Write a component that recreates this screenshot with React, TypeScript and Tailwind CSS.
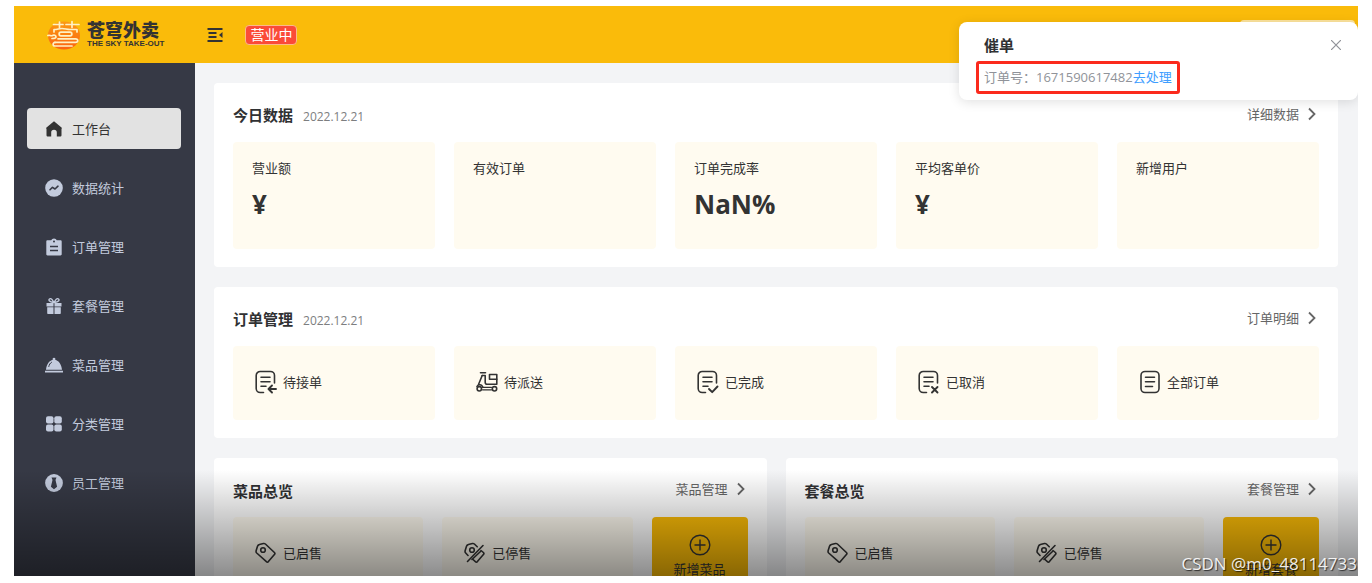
import type { ReactNode } from "react";

function LogoMark() {
  return (
    <svg className="h-[30px] w-[34px] shrink-0" viewBox="0 0 34 30" fill="none">
      <defs>
        <linearGradient id="sun" x1="0" y1="0" x2="0" y2="1">
          <stop offset="0" stopColor="#fb9a12" />
          <stop offset="1" stopColor="#fb6312" />
        </linearGradient>
      </defs>
      <ellipse cx="17" cy="15.5" rx="16" ry="14" fill="url(#sun)" />
      <g stroke="#fff1c4" strokeWidth="1.7" strokeLinecap="round" strokeLinejoin="round">
        <path d="M6.5 4.5H16M19 4.5h13M12.5 2v5.5M25 1.5v6" />
        <path d="M7 12V9.500c3.500 0 5-1 8-1s5 1 8 1h7V12" />
        <path d="M14 12.200h9c2.500 0 2.500 3.600 0 3.600h-9c-2.500 0-2.500-3.600 0-3.600z" />
        <path d="M1 15.500c1.500-1 3 1 4.500 0s3.500 0 3.500 1.500-2 1.500-4 1.500" />
        <path d="M11 18.800h17.500c3 0 3 3.600 0 3.600H8" />
        <path d="M8 22.400c-2.500 0-2.500 3.600 0 3.600h17" />
      </g>
    </svg>
  );
}

const svgProps = { className: "h-[18px] w-[18px] shrink-0", viewBox: "0 0 18 18", fill: "currentColor" };

function HomeIcon() {
  return (
    <svg {...svgProps}>
      <path d="M9 1.300 1.500 7.600c-.5.500-.4 1 0 1.400V15c0 .9.5 1.600 1.500 1.600h3.200v-4.100a2.800 2.800 0 0 1 5.600 0v4.100H15c1 0 1.500-.7 1.500-1.600V9c.4-.4.5-.9 0-1.400z" />
    </svg>
  );
}

function StatsIcon() {
  return (
    <svg {...svgProps}>
      <circle cx="9" cy="9" r="8.8" />
      <path
        d="m5 10.800 2.500-2.500 2.500 1.700 3-2.800"
        fill="none"
        stroke="#363945"
        strokeWidth="1.6"
        strokeLinejoin="round"
        strokeLinecap="round"
      />
    </svg>
  );
}

function ClipboardIcon() {
  return (
    <svg {...svgProps}>
      <path d="M2.500 2.300h3.700a3 3 0 0 1 5.600 0h3.700c.7 0 1.200.5 1.200 1.200v12.800c0 .7-.5 1.200-1.200 1.200h-13c-.7 0-1.200-.5-1.200-1.200V3.500c0-.7.5-1.200 1.200-1.200z" />
      <path d="M5 8.500h8M5 12.500h8" stroke="#363945" strokeWidth="1.4" />
      <circle cx="9" cy="3.500" r="1" fill="#363945" />
    </svg>
  );
}

function GiftIcon() {
  return (
    <svg {...svgProps}>
      <path d="M1.500 6h7v3.500h-7zM9.500 6h7v3.500h-7zM2.200 10.300h6.300V17H3.200c-.6 0-1-.4-1-1zM9.500 10.300h6.300V16c0 .6-.4 1-1 1H9.500z" />
      <path
        d="M8.800 5.500C7.500 2 6 1.300 4.800 1.800 3 2.600 3.800 5 8.800 5.500zM9.200 5.500c1.300-3.500 2.800-4.200 4-3.700 1.800.8 1 3.200-4 3.700z"
        fill="none"
        stroke="currentColor"
        strokeWidth="1.3"
      />
    </svg>
  );
}

function DishIcon() {
  return (
    <svg {...svgProps}>
      <path d="M7.800 3.800a1.400 1.400 0 1 1 2.400 0c3.500.8 6.300 4.500 6.800 10H1c.5-5.500 3.300-9.200 6.800-10zM0 14.800h18v1.600H0z" />
      <path d="M3.800 10.500c.4-2 1.300-3.300 2.700-4.200" fill="none" stroke="#363945" strokeWidth="1" strokeLinecap="round" />
    </svg>
  );
}

function GridIcon() {
  return (
    <svg {...svgProps}>
      <rect x="1" y="1.300" width="7.500" height="7.200" rx="2" />
      <rect x="9.300" y="1.300" width="7.500" height="7.200" rx="2" />
      <rect x="1" y="9.400" width="7.500" height="7.200" rx="2" />
      <rect x="9.300" y="9.400" width="7.500" height="7.200" rx="2" />
    </svg>
  );
}

function StaffIcon() {
  return (
    <svg {...svgProps}>
      <circle cx="9" cy="9" r="8.900" />
      <path d="M6.500 3.500h5L10.500 6l1.600 6.800L9 15.200l-3.100-2.400L7.500 6z" fill="#363945" />
    </svg>
  );
}

function LineIcon({ children }: { children: ReactNode }) {
  return (
    <svg
      className="h-6 w-[22px] shrink-0"
      viewBox="0 0 22 24"
      fill="none"
      stroke="currentColor"
      strokeWidth="1.6"
      strokeLinecap="round"
      strokeLinejoin="round"
    >
      {children}
    </svg>
  );
}

const openSheet = "M8.500 22.500H5.200a4 4 0 0 1-4-4v-13a4 4 0 0 1 4-4h10.300a4 4 0 0 1 4 4V13";
const sheetLines = "M6 7.300h9M6 11.800h9M6 16.300h5";

function PendingIcon() {
  return (
    <LineIcon>
      <path d={openSheet} />
      <path d={sheetLines} />
      <path d="M21 19h-7M17 15.500 13.500 19l3.500 3.500" strokeWidth="1.900" />
    </LineIcon>
  );
}

function ScooterIcon() {
  return (
    <LineIcon>
      <path d="M4.500 2.800h5" />
      <path d="M6.200 5.500h3v6.800c0 1.400.6 2 1.800 2h9.800v-5" />
      <path d="M6.200 5.500 2.700 14M1 16.500c1-2.500 5-2.500 5.800.8" />
      <path d="M13.500 4.500h7.300v4.800h-7.300z" />
      <circle cx="3.300" cy="18.800" r="2.200" />
      <circle cx="18.500" cy="18.800" r="2.200" />
      <path d="M7 17.300h8.500M6.500 19.800h9" strokeWidth="1.300" />
    </LineIcon>
  );
}

function DoneIcon() {
  return (
    <LineIcon>
      <path d={openSheet} />
      <path d={sheetLines} />
      <path d="m12 19 3.200 3.200 5.300-5.700" strokeWidth="1.900" />
    </LineIcon>
  );
}

function CancelledIcon() {
  return (
    <LineIcon>
      <path d={openSheet} />
      <path d={sheetLines} />
      <path d="m14 17 5.500 5.500M19.500 17 14 22.500" strokeWidth="1.900" />
    </LineIcon>
  );
}

function AllOrdersIcon() {
  return (
    <LineIcon>
      <rect x="2" y="1.500" width="18" height="21" rx="4" />
      <path d="M6.500 7.300h9M6.500 11.800h9M6.500 16.500h7" />
    </LineIcon>
  );
}

function OnSaleIcon() {
  return (
    <LineIcon>
      <path d="M1.200 9.500 2.500 5.300c.3-1 .8-1.500 1.800-1.700l4.200-1.100c.8-.2 1.300 0 1.900.5l9 8.500c.8.800.8 1.300 0 2.100l-6 7c-.7.700-1.300.8-2 .1L1.700 12c-.7-.7-.8-1.500-.5-2.500z" />
      <circle cx="8" cy="9" r="2.300" />
    </LineIcon>
  );
}

function OffSaleIcon() {
  return (
    <LineIcon>
      <path d="M4 14.500 1.700 12c-.7-.7-.8-1.500-.5-2.500l1.300-4.200c.3-1 .8-1.500 1.800-1.700l4.200-1.100c.8-.2 1.300 0 1.900.5l2.800 2.800M17 9.500l2.400 2c.8.800.8 1.300 0 2.100l-6 7c-.7.700-1.300.8-2 .1L9 18.500" />
      <circle cx="8" cy="9" r="2.300" />
      <path d="M19 4.500 3.500 20.500M16.500 10.500 8 18.500" />
    </LineIcon>
  );
}

const navItems = [
  { label: "工作台", icon: <HomeIcon />, active: true },
  { label: "数据统计", icon: <StatsIcon /> },
  { label: "订单管理", icon: <ClipboardIcon /> },
  { label: "套餐管理", icon: <GiftIcon /> },
  { label: "菜品管理", icon: <DishIcon /> },
  { label: "分类管理", icon: <GridIcon /> },
  { label: "员工管理", icon: <StaffIcon /> },
];

const stats = [
  { label: "营业额", value: "¥" },
  { label: "有效订单", value: "" },
  { label: "订单完成率", value: "NaN%" },
  { label: "平均客单价", value: "¥" },
  { label: "新增用户", value: "" },
];

const orderStates = [
  { label: "待接单", icon: <PendingIcon /> },
  { label: "待派送", icon: <ScooterIcon /> },
  { label: "已完成", icon: <DoneIcon /> },
  { label: "已取消", icon: <CancelledIcon /> },
  { label: "全部订单", icon: <AllOrdersIcon /> },
];

interface PanelProps {
  title: string;
  date?: string;
  link: string;
  children: ReactNode;
}

function Panel({ title, date, link, children }: PanelProps) {
  return (
    <section className="min-w-0 flex-1 rounded-[4px] bg-white px-[19px] pb-[18px]">
      <div className="flex h-[59px] items-center justify-between pt-[3px]">
        <div className="flex items-baseline gap-[10px] pt-[3px]">
          <h2 className="text-[15px] leading-5 font-bold text-[#303133]">{title}</h2>
          {date && <span className="text-xs leading-5 text-[#7d7e80]">{date}</span>}
        </div>
        <a href="#" className="flex items-center gap-1 text-[13px] leading-5 text-[#666]">
          {link}
          <svg className="h-4 w-4" viewBox="0 0 16 16" fill="none" stroke="currentColor" strokeWidth="1.8">
            <path d="m6 2.500 5.500 5.500L6 13.500" />
          </svg>
        </a>
      </div>
      {children}
    </section>
  );
}

function IconTile({ label, icon }: { label: string; icon: ReactNode }) {
  return (
    <a
      href="#"
      className="flex h-[74px] min-w-0 flex-1 items-center gap-[6px] rounded-[4px] bg-[#fffbf0] pb-[2px] pl-[22px] text-[13px] leading-5 text-[#333]"
    >
      {icon}
      {label}
    </a>
  );
}

function Overview({ title, link, action }: { title: string; link: string; action: string }) {
  return (
    <Panel title={title} link={link}>
      <div className="flex gap-[19px]">
        <IconTile label="已启售" icon={<OnSaleIcon />} />
        <IconTile label="已停售" icon={<OffSaleIcon />} />
        <button
          type="button"
          className="flex h-[74px] w-24 shrink-0 flex-col items-center justify-center gap-[3px] rounded-[4px] bg-[#fabb07] pt-1 text-[13px] leading-5 text-[#333]"
        >
          <svg className="h-[22px] w-[22px]" viewBox="0 0 22 22" fill="none" stroke="currentColor" strokeWidth="1.4">
            <circle cx="11" cy="11" r="9.800" />
            <path d="M11 5.500v11M5.500 11h11" />
          </svg>
          {action}
        </button>
      </div>
    </Panel>
  );
}

function ReminderToast() {
  return (
    <div
      role="alert"
      className="absolute top-4 right-0 flex h-[78px] w-[399px] flex-col items-start rounded-[8px] bg-white px-[17px] pt-[13px] shadow-[0_2px_12px_rgba(0,0,0,0.12)]"
    >
      <div className="flex w-full items-center justify-between pl-2">
        <h2 className="text-[15px] leading-5 font-bold text-[#303133]">催单</h2>
        <button type="button" aria-label="关闭" className="text-[#909399]">
          <svg className="h-[10px] w-[10px]" viewBox="0 0 10 10" fill="none" stroke="currentColor" strokeWidth="1.2">
            <path d="m0 0 10 10M10 0 0 10" />
          </svg>
        </button>
      </div>
      <p className="mt-[6px] flex h-[33px] items-center rounded-[3px] border-[3px] border-[#fb2a1d] px-[5px] pb-[2px] text-[13px] leading-5 text-[#909399]">
        订单号：1671590617482
        <a href="#" className="text-[#409eff]">
          去处理
        </a>
      </p>
    </div>
  );
}

export default function App() {
  return (
    <div className="h-screen bg-white px-[14px] pt-[6px] pb-[7px] font-['Open_Sans','Noto_Sans_CJK_SC',sans-serif]">
      <div className="relative flex h-full flex-col overflow-hidden bg-[#f3f4f6]">
        <header className="flex h-[57px] shrink-0 items-center bg-[#fabb0a] pl-[33px]">
          <div className="flex items-center gap-[6px] text-[#333]">
            <LogoMark />
            <div className="flex flex-col">
              <span className="text-[18px] leading-[18px] font-black">苍穹外卖</span>
              <span className="font-['Liberation_Sans',sans-serif] text-[8px] leading-[10px] font-bold">
                THE SKY TAKE-OUT
              </span>
            </div>
          </div>
          <button type="button" aria-label="收起菜单" className="ml-[43px] text-[#333]">
            <svg className="h-4 w-4" viewBox="0 0 16 16" fill="none" stroke="currentColor" strokeWidth="1.8">
              <path d="M.5 2h15M1.500 6h8M1.500 10h8M.5 14h15" />
              <path d="M15.500 5v6L12 8z" fill="currentColor" stroke="none" />
            </svg>
          </button>
          <span className="ml-[22px] rounded-[4px] border border-[#fcb98a] bg-[#fb4b38] px-1 text-sm leading-[18px] text-white">
            营业中
          </span>
          <div className="mr-[3px] ml-auto h-[29px] w-[115px] rounded-[4px] bg-white/60" />
        </header>

        <div className="flex min-h-0 flex-1">
          <nav className="flex w-[181px] shrink-0 flex-col gap-[18px] bg-[#363945] pt-[45px] pr-[14px] pl-[13px]">
            {navItems.map((item) => (
              <a
                key={item.label}
                href="#"
                className={`flex h-[41px] shrink-0 items-center gap-[9px] rounded-[4px] pl-[18px] text-[13px] leading-5 ${
                  item.active ? "bg-[#e2e2e2] text-[#333]" : "text-[#c3cbdd]"
                }`}
              >
                {item.icon}
                {item.label}
              </a>
            ))}
          </nav>

          <main className="flex min-w-0 flex-1 flex-col gap-5 overflow-hidden pt-5 pr-5 pl-[19px]">
            <div className="flex shrink-0">
              <Panel title="今日数据" date="2022.12.21" link="详细数据">
                <div className="grid grid-cols-5 gap-[19px]">
                  {stats.map((s) => (
                    <div key={s.label} className="h-[107px] rounded-[4px] bg-[#fffbf0] px-[19px] pt-4">
                      <p className="text-[13px] leading-5 text-[#333]">{s.label}</p>
                      <p className="mt-[6px] text-[26px] leading-10 font-bold text-[#333]">{s.value}</p>
                    </div>
                  ))}
                </div>
              </Panel>
            </div>

            <div className="flex shrink-0">
              <Panel title="订单管理" date="2022.12.21" link="订单明细">
                <div className="flex gap-[19px]">
                  {orderStates.map((s) => (
                    <IconTile key={s.label} label={s.label} icon={s.icon} />
                  ))}
                </div>
              </Panel>
            </div>

            <div className="flex shrink-0 gap-[19px]">
              <Overview title="菜品总览" link="菜品管理" action="新增菜品" />
              <Overview title="套餐总览" link="套餐管理" action="新增套餐" />
            </div>
          </main>
        </div>

        <div className="pointer-events-none absolute inset-x-0 bottom-0 h-[106px] bg-linear-to-b from-black/0 to-black/45" />
        <ReminderToast />
        <span className="absolute right-px bottom-0 text-[17px] leading-6 text-white/90 [text-shadow:1px_1px_1px_rgba(0,0,0,0.7)]">
          CSDN @m0_48114733
        </span>
      </div>
    </div>
  );
}
